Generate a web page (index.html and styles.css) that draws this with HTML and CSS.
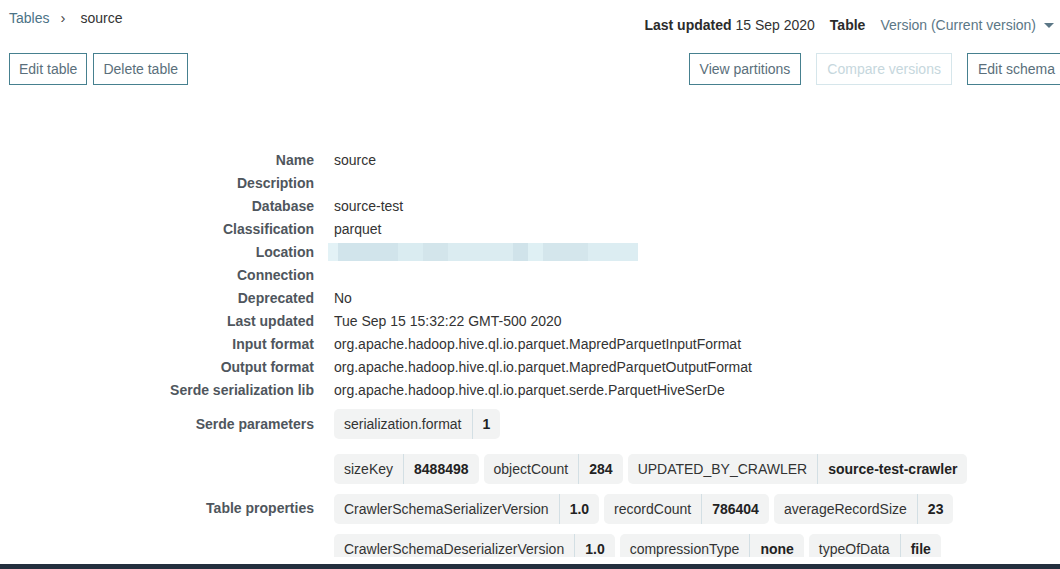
FILE: index.html
```html
<!DOCTYPE html>
<html lang="en">
<head>
<meta charset="utf-8">
<title>source - Tables</title>
<link rel="stylesheet" href="styles.css">
</head>
<body>
<div class="main">
  <div class="page">
    <header class="header">
      <nav class="crumbs">
        <a class="crumb-link" href="#">Tables</a>
        <span class="crumb-sep">›</span>
        <span class="crumb-current">source</span>
      </nav>
      <div class="meta">
        <span><b>Last updated</b> 15 Sep 2020</span>
        <b>Table</b>
        <span class="version">Version (Current version) <span class="caret"></span></span>
      </div>
    </header>

    <div class="toolbar">
      <div class="btn-group left">
        <button class="btn">Edit table</button>
        <button class="btn">Delete table</button>
      </div>
      <div class="btn-group right">
        <button class="btn">View partitions</button>
        <button class="btn disabled">Compare versions</button>
        <button class="btn">Edit schema</button>
      </div>
    </div>

    <dl class="details">
      <dt>Name</dt><dd>source</dd>
      <dt>Description</dt><dd></dd>
      <dt>Database</dt><dd>source-test</dd>
      <dt>Classification</dt><dd>parquet</dd>
      <dt>Location</dt><dd><div class="redacted"></div></dd>
      <dt>Connection</dt><dd></dd>
      <dt>Deprecated</dt><dd>No</dd>
      <dt>Last updated</dt><dd>Tue Sep 15 15:32:22 GMT-500 2020</dd>
      <dt>Input format</dt><dd>org.apache.hadoop.hive.ql.io.parquet.MapredParquetInputFormat</dd>
      <dt>Output format</dt><dd>org.apache.hadoop.hive.ql.io.parquet.MapredParquetOutputFormat</dd>
      <dt>Serde serialization lib</dt><dd>org.apache.hadoop.hive.ql.io.parquet.serde.ParquetHiveSerDe</dd>
      <dt class="center">Serde parameters</dt>
      <dd class="tags serde">
        <span class="tag"><span class="k">serialization.format</span><span class="v">1</span></span>
      </dd>
      <dt class="center">Table properties</dt>
      <dd class="tags">
        <span class="tag"><span class="k">sizeKey</span><span class="v">8488498</span></span>
        <span class="tag"><span class="k">objectCount</span><span class="v">284</span></span>
        <span class="tag"><span class="k">UPDATED_BY_CRAWLER</span><span class="v">source-test-crawler</span></span>
        <span class="tag"><span class="k">CrawlerSchemaSerializerVersion</span><span class="v">1.0</span></span>
        <span class="tag"><span class="k">recordCount</span><span class="v">786404</span></span>
        <span class="tag"><span class="k">averageRecordSize</span><span class="v">23</span></span>
        <span class="tag"><span class="k">CrawlerSchemaDeserializerVersion</span><span class="v">1.0</span></span>
        <span class="tag"><span class="k">compressionType</span><span class="v">none</span></span>
        <span class="tag"><span class="k">typeOfData</span><span class="v">file</span></span>
      </dd>
    </dl>
  </div>
</div>
<footer class="footer"></footer>
</body>
</html>
```

FILE: styles.css
```css
html, body {
  margin: 0;
  padding: 0;
  overflow: hidden;
  background: #fff;
}
body {
  font-family: "Liberation Sans", Arial, sans-serif;
  font-size: 14px;
  color: #333;
}
.main {
  height: 557px;
  overflow: hidden;
}
.page {
  width: 1066px;
  box-sizing: border-box;
  padding-left: 9px;
}
.header {
  display: flex;
  justify-content: space-between;
  align-items: flex-start;
  padding-top: 8px;
}
.crumbs {
  line-height: 20px;
  display: flex;
  align-items: center;
}
.crumb-link {
  color: #4b7386;
  text-decoration: none;
}
.crumb-sep {
  color: #444;
  margin: 0 15px 0 11px;
  font-size: 15px;
}
.crumb-current {
  color: #333;
}
.meta {
  padding-top: 7px;
  padding-right: 12px;
  line-height: 20px;
  display: flex;
  align-items: center;
  gap: 15px;
  color: #333;
}
.meta b {
  color: #2b2b2b;
}
.version {
  color: #5b7786;
  display: inline-flex;
  align-items: center;
  gap: 8px;
}
.caret {
  width: 0;
  height: 0;
  border-left: 5px solid transparent;
  border-right: 5px solid transparent;
  border-top: 5px solid #5b7786;
}
.toolbar {
  display: flex;
  justify-content: space-between;
  margin-top: 18px;
}
.btn-group {
  display: flex;
  gap: 6px;
}
.btn-group.right {
  gap: 15px;
}
.btn {
  font-family: inherit;
  font-size: 14px;
  line-height: 18px;
  padding: 6px 10px;
  background: #fff;
  border: 1px solid #46808f;
  border-radius: 0;
  color: #5a6f7b;
  margin: 0;
}
.btn-group.left .btn {
  padding: 6px 9px;
}
.btn.disabled {
  border-color: #d6e6eb;
  color: #c6d7dd;
}
.details {
  display: grid;
  grid-template-columns: 305px 1fr;
  column-gap: 20px;
  margin: 64px 0 0;
}
.details dt,
.details dd {
  margin: 0;
  padding: 3px 0;
  line-height: 17px;
}
.details dt {
  text-align: right;
  font-weight: bold;
  color: #4f565d;
}
.details dt.center {
  align-self: center;
}
.details dd {
  color: #333;
}
.redacted {
  width: 310px;
  height: 18px;
  margin: -1px 0 0 -6px;
  background: linear-gradient(90deg,
    #e3f2f6 0 10px,
    #d1e4eb 10px 70px,
    #daecf1 70px 95px,
    #d3e5eb 95px 120px,
    #dbecf1 120px 185px,
    #d0e3ea 185px 200px,
    #dff0f4 200px 215px,
    #d4e6ec 215px 260px,
    #dcedf2 260px 310px);
}
.details dd.tags {
  display: flex;
  flex-wrap: wrap;
  gap: 10px 5px;
  margin: 5px 0 4px;
  padding: 3px 0;
  max-width: 700px;
}
.details dd.tags.serde {
  margin-top: 4px;
}
.tag {
  display: inline-flex;
  background: #f2f3f3;
  border-radius: 5px;
  line-height: 18px;
}
.tag .k {
  padding: 6px 10px;
  color: #333;
}
.tag .v {
  padding: 6px 10px;
  font-weight: bold;
  color: #222;
  border-left: 1px solid #d3dfe4;
}
.footer {
  margin-top: 7px;
  height: 5px;
  background: #232f3e;
}
```
